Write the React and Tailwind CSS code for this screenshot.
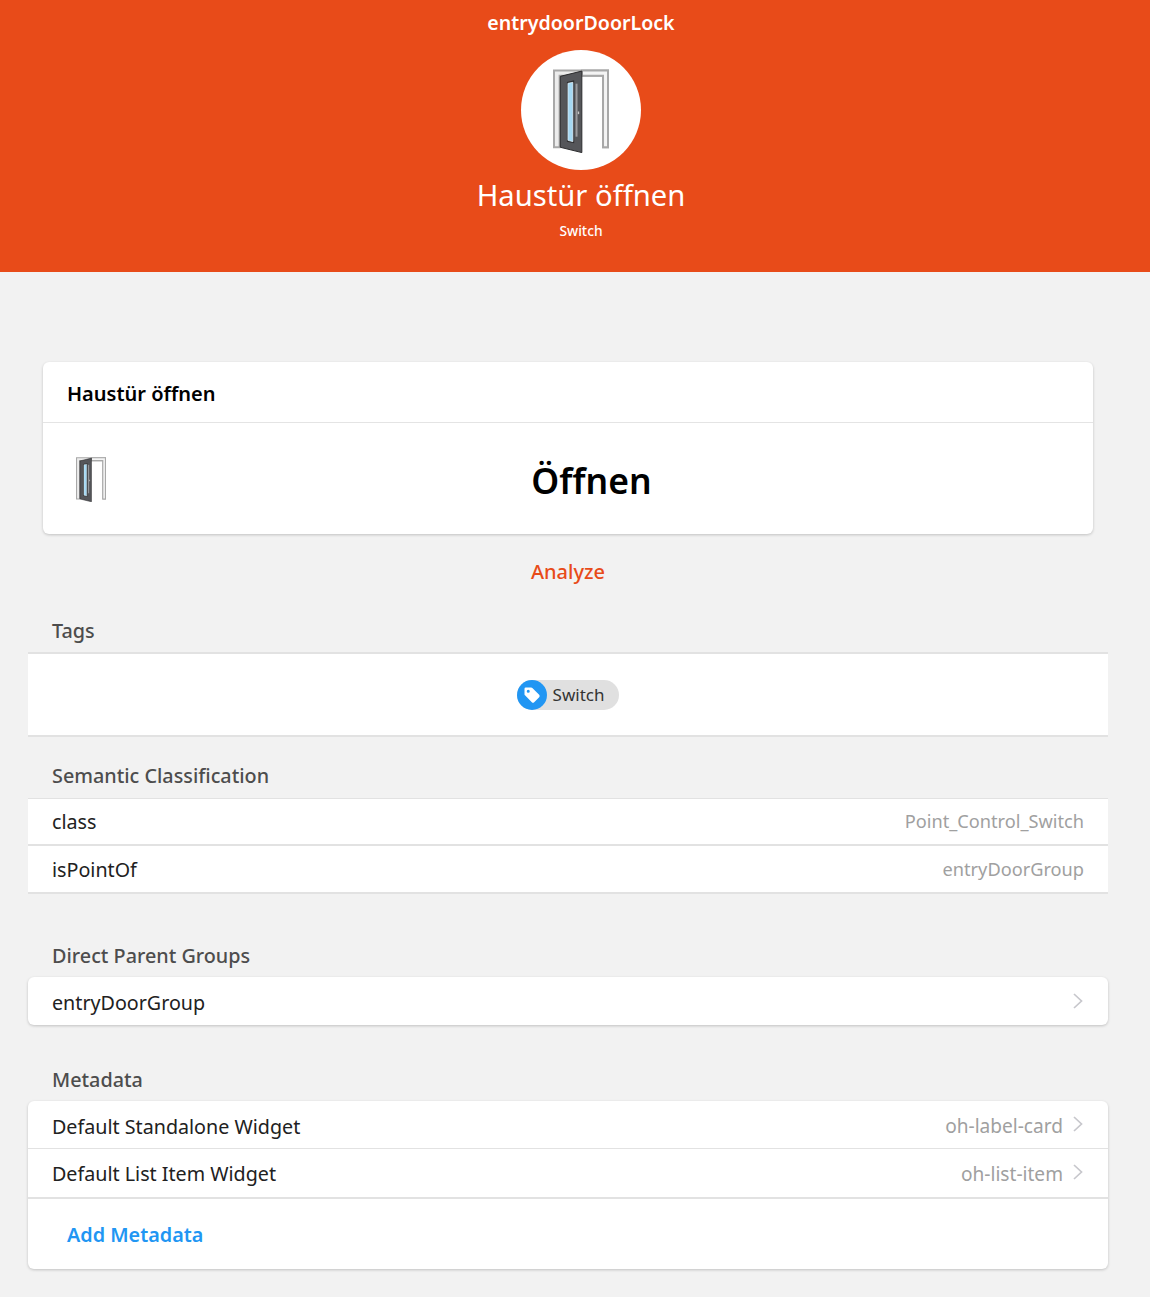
import React from 'react';

const DoorIcon = ({ className }) => (
    <svg viewBox="0 0 169 251" className={className}>
        {/* frame */}
        <path d="M3 235 V3 H166 V235 H151 V19 H20 V235 Z" fill="#ececec" stroke="#a8a8a8" strokeWidth="6" />
        <path d="M87 3 H166 V235 H151 V19 H87 Z" fill="#f4f4f4" stroke="#a8a8a8" strokeWidth="6" />
        {/* leaf */}
        <path d="M22 21 L87 5 V251 L22 235 Z" fill="#55565a" stroke="#2a2a2c" strokeWidth="3" />
        <path d="M42 38 L64 33 V223 L42 218 Z" fill="#2e2e30" />
        <path d="M45 42 L60 39 V218 L45 214 Z" fill="#a5d8f3" stroke="#eef8fd" strokeWidth="2" />
        <rect x="68" y="43" width="6" height="160" fill="#9a9a9e" />
        <rect x="75" y="127" width="4" height="8" fill="#c9c9c9" />
    </svg>
);

const TagIcon = () => (
    <svg viewBox="0 0 24 24" className="w-5 h-5" fill="#ffffff">
        <path d="M3 4.5 A1.5 1.5 0 0 1 4.5 3 H11 a2 2 0 0 1 1.4.6 l8.2 8.2 a2 2 0 0 1 0 2.8 l-6 6 a2 2 0 0 1-2.8 0 L3.6 12.4 A2 2 0 0 1 3 11 Z M7.5 5.7 a1.8 1.8 0 1 0 0 3.6 a1.8 1.8 0 0 0 0-3.6 Z" fillRule="evenodd" />
    </svg>
);

const Chevron = () => (
    <svg viewBox="0 0 10 16" className="w-[10px] h-4 ml-[10px] mr-[1px] -mt-[4px] shrink-0" fill="none" stroke="#c7c7cc" strokeWidth="1.7">
        <path d="M1 1 L8.5 8 L1 15" />
    </svg>
);

const SectionTitle = ({ children, className = '' }) => (
    <div className={`px-6 text-[19.8px] leading-6 font-medium text-[#4d4d4d] ${className}`}>{children}</div>
);

const Row = ({ label, value, chevron, valueSize = 'text-[19.1px]', className = 'h-12' }) => (
    <div className={`pl-6 pr-6 flex items-center justify-between text-[19.7px] text-[#212121] ${className}`}>
        <span>{label}</span>
        <span className={`flex items-center text-[#a0a0a0] ${valueSize}`}>
            {value}
            {chevron && <Chevron />}
        </span>
    </div>
);

export default function App() {
    return (
        <div className="min-h-[1297px] bg-[#f2f2f2] font-['Noto_Sans',sans-serif]">
            {/* Header */}
            <div className="h-[272px] bg-[#e84b19] text-white flex flex-col items-center pl-[12px]">
                <div className="mt-[9px] h-7 text-[19.6px] leading-7 font-semibold">entrydoorDoorLock</div>
                <div className="mt-[13px] w-[120px] h-[120px] rounded-full bg-white flex items-center justify-center">
                    <DoorIcon className="w-[56px] h-[84px] mt-[2px]" />
                </div>
                <div className="mt-[5px] text-[29.2px] leading-10">Haustür öffnen</div>
                <div className="mt-[6px] text-[13.8px] leading-5 font-medium">Switch</div>
            </div>

            <div className="pl-[28px] pr-[42px] pt-[90px]">
                {/* Widget card */}
                <div className="mx-[15px] h-[172px] bg-white rounded-md shadow-[0_1px_3px_rgba(0,0,0,0.2)]">
                    <div className="h-[61px] px-6 pt-[3px] flex items-center border-b border-[#e4e4e4] text-[20px] font-semibold text-black">
                        Haustür öffnen
                    </div>
                    <div className="h-[111px] flex items-center">
                        <DoorIcon className="ml-[33px] w-[30px] h-[45px] mt-[2px]" />
                        <div className="flex-1 text-center pr-[16px] pt-[4px] text-[35.5px] font-semibold text-black">Öffnen</div>
                    </div>
                </div>

                <div className="mt-[24px] h-7 flex justify-center text-[20px] leading-7 font-medium text-[#e84b19]">Analyze</div>

                <SectionTitle className="mt-[33px]">Tags</SectionTitle>
                <div className="mt-[9px] h-[85px] bg-white border-y-2 border-[#e2e2e2] flex items-center justify-center">
                    <div className="h-[30px] pr-[15px] rounded-full bg-[#e0e0e0] flex items-center text-[17px] text-[#333333]">
                        <span className="w-[30px] h-[30px] rounded-full bg-[#2196f3] flex items-center justify-center mr-[6px]">
                            <TagIcon />
                        </span>
                        Switch
                    </div>
                </div>

                <SectionTitle className="mt-[27px]">Semantic Classification</SectionTitle>
                <div className="mt-[10px] bg-white border-t border-b-2 border-[#e2e2e2]">
                    <Row label="class" value="Point_Control_Switch" valueSize="text-[18.2px]" className="h-[47px] border-b-2 border-[#e2e2e2]" />
                    <Row label="isPointOf" value="entryDoorGroup" valueSize="text-[18.2px]" className="h-[46px] pt-[2px]" />
                </div>

                <SectionTitle className="mt-[50px]">Direct Parent Groups</SectionTitle>
                <div className="mt-[9px] bg-white rounded-md shadow-[0_1px_3px_rgba(0,0,0,0.2)]">
                    <Row label="entryDoorGroup" chevron className="h-12 pt-[3px]" />
                </div>

                <SectionTitle className="mt-[43px]">Metadata</SectionTitle>
                <div className="mt-[9px] bg-white rounded-md shadow-[0_1px_3px_rgba(0,0,0,0.2)]">
                    <Row label="Default Standalone Widget" value="oh-label-card" chevron className="h-12 pt-[4px] border-b border-[#e2e2e2]" />
                    <Row label="Default List Item Widget" value="oh-list-item" chevron className="h-[50px] pt-[2px] border-b-2 border-[#e2e2e2]" />
                    <div className="h-[70px] pl-[39px] pt-[2px] flex items-center text-[19.8px] font-semibold text-[#2196f3]">Add Metadata</div>
                </div>
            </div>
        </div>
    );
}
